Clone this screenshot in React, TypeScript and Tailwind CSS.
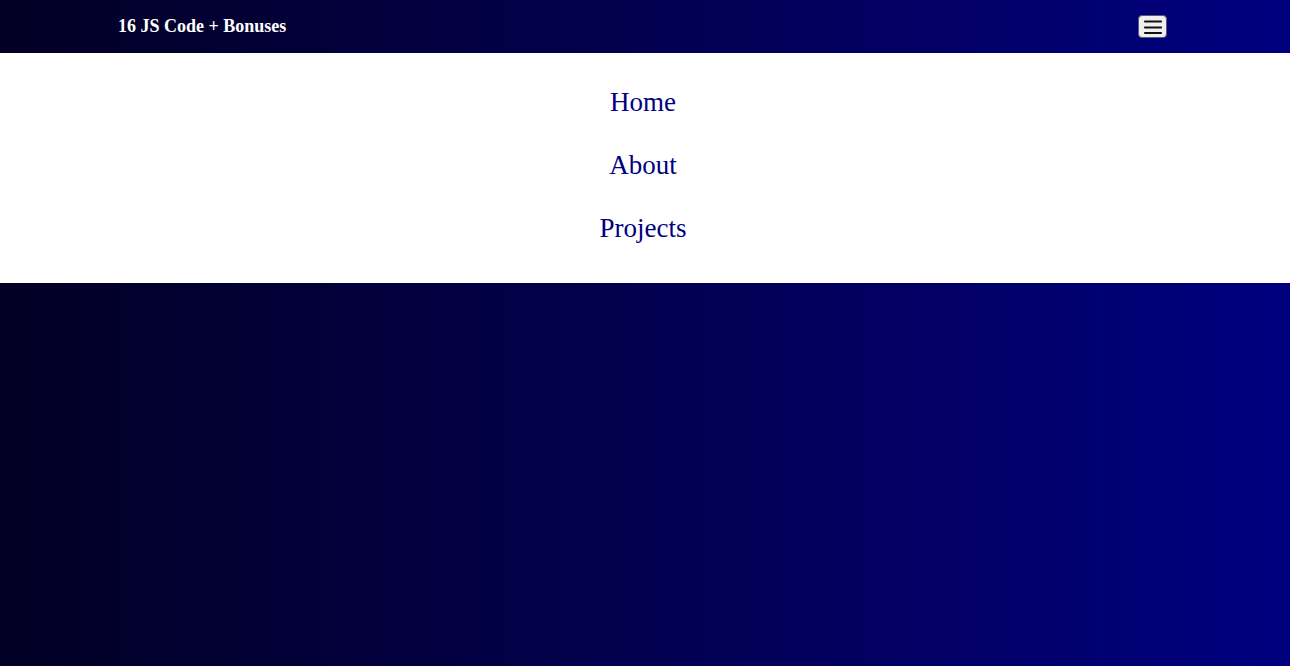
const links = ['Home', 'About', 'Projects'];

export default function App() {
  return (
    <div
      className="min-h-screen w-full bg-gradient-to-r from-[#020024] to-[#000080]"
      style={{ fontFamily: '"Liberation Serif", "Times New Roman", serif' }}
    >
      {/* top bar */}
      <header className="flex h-[53px] items-center justify-between pl-[118px] pr-[123px]">
        <span className="text-[18px] font-bold text-white">16 JS Code + Bonuses</span>
        <button className="flex h-[23px] w-[29px] items-center justify-center rounded-[4px] border border-[#5a5a7a] bg-[#efefef]">
          <svg width="18" height="14" viewBox="0 0 18 14">
            <rect x="0" y="0.5" width="18" height="2" rx="0.8" fill="#111" />
            <rect x="0" y="6.5" width="18" height="2" rx="0.8" fill="#111" />
            <rect x="0" y="12" width="18" height="2" rx="0.8" fill="#111" />
          </svg>
        </button>
      </header>

      {/* open menu */}
      <nav className="bg-white pt-[17px] pb-[24px]">
        <ul className="flex flex-col items-center pr-[4px]">
          {links.map((l) => (
            <li key={l} className="flex h-[63px] items-center">
              <a href="#" className="text-[27px] leading-[30px] text-[#000080]">
                {l}
              </a>
            </li>
          ))}
        </ul>
      </nav>
    </div>
  );
}
